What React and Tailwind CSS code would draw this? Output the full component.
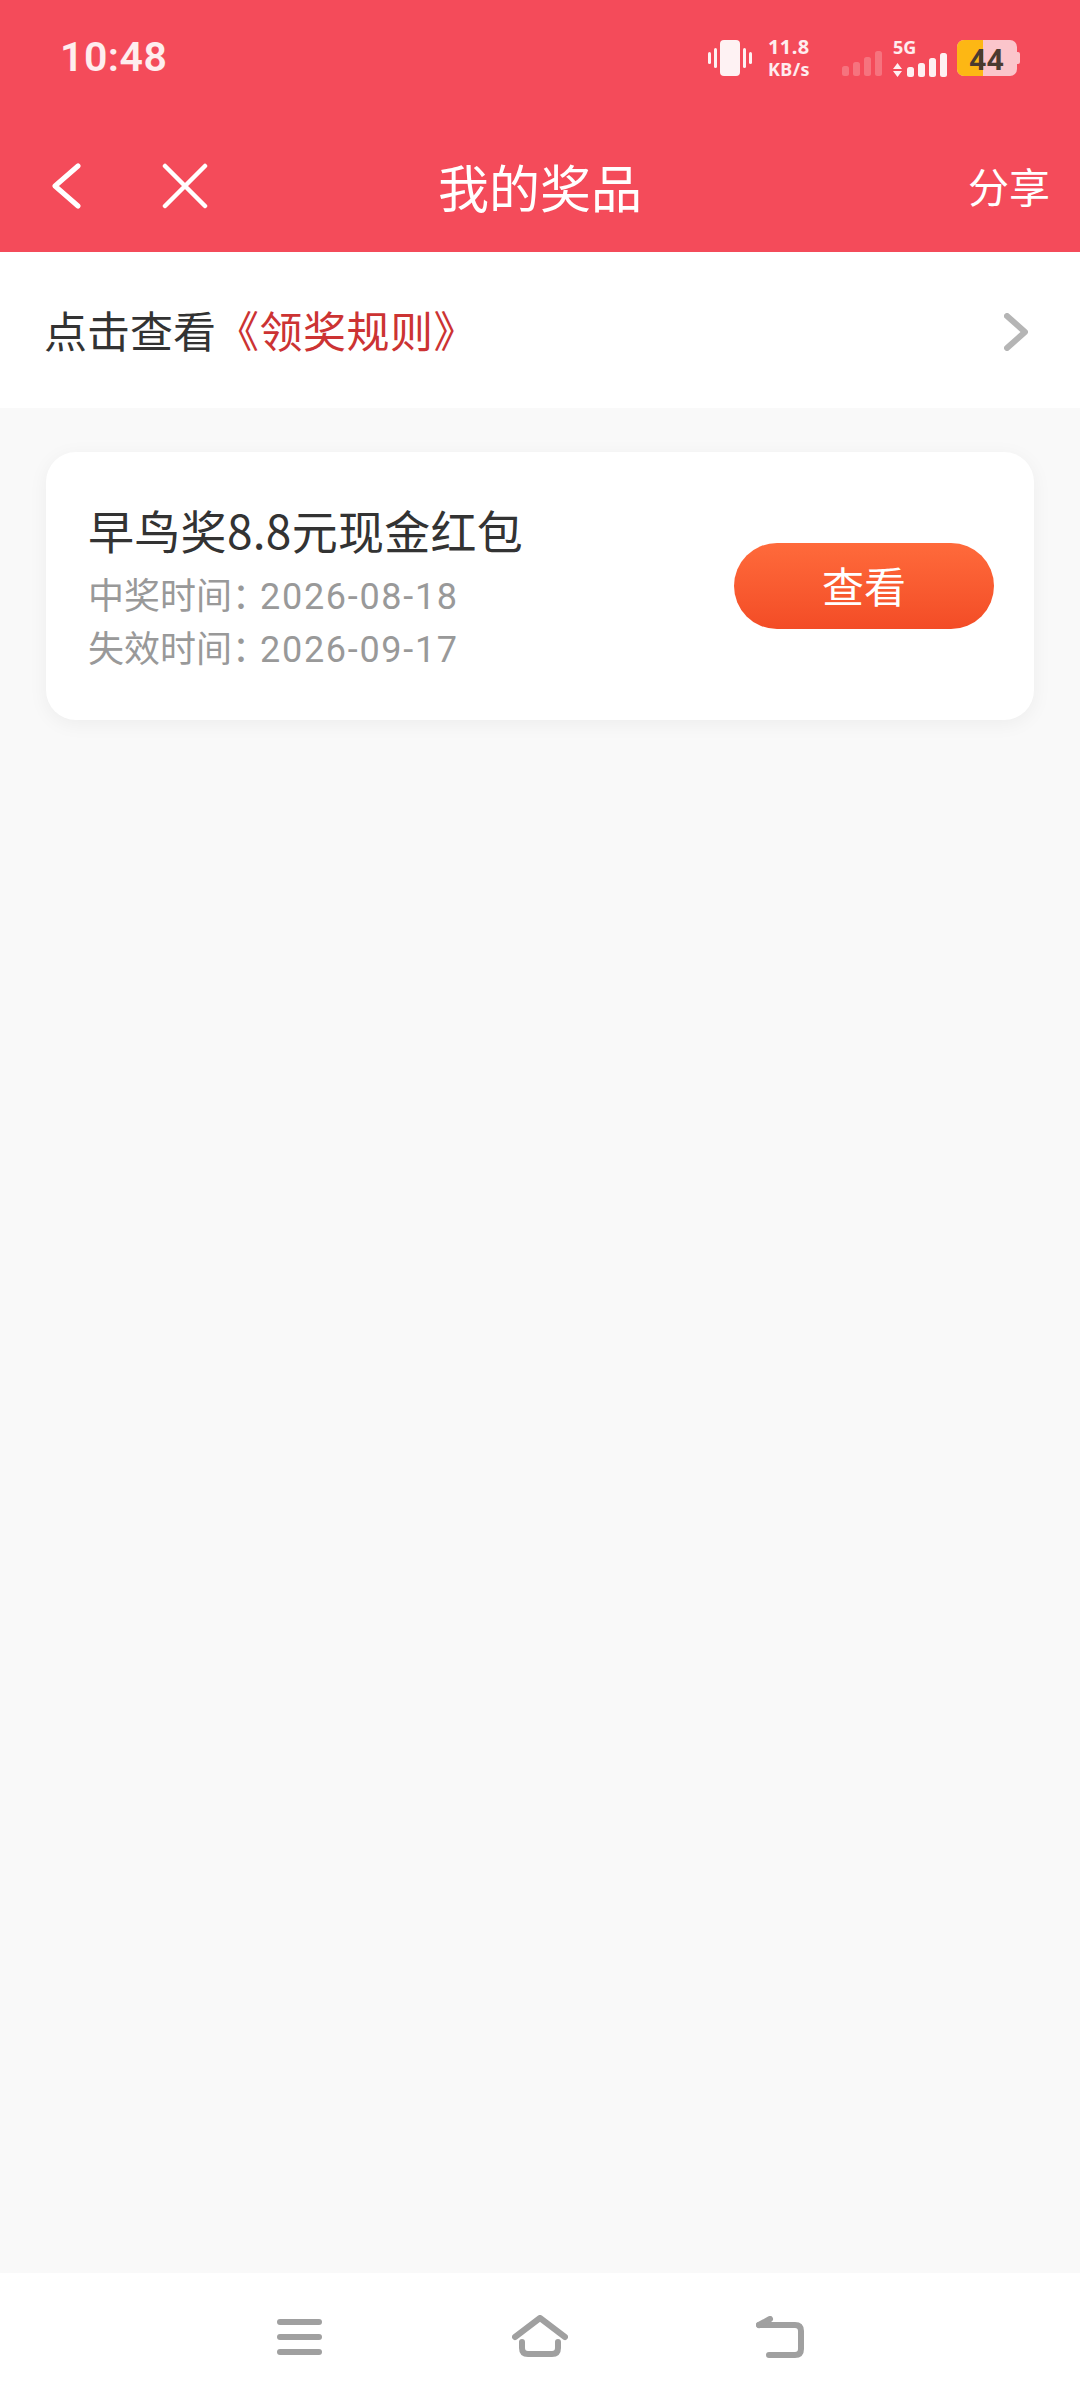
const cjk = { fontFamily: '"Noto Sans CJK SC", "Noto Sans", sans-serif' };

function StatusIcons() {
  return (
    <div className="flex items-center">
      {/* vibrate */}
      <svg width="44" height="36" viewBox="0 0 44 36" fill="#fff" opacity="0.93">
        <rect x="12" y="0" width="20" height="36" rx="4" />
        <rect x="0" y="12" width="3" height="12" rx="1.5" />
        <rect x="6" y="8" width="3" height="20" rx="1.5" />
        <rect x="35" y="8" width="3" height="20" rx="1.5" />
        <rect x="41" y="12" width="3" height="12" rx="1.5" />
      </svg>
      <div className="ml-4 w-[48px] flex flex-col text-white/90 font-bold text-[20px] leading-[22px] font-['Noto_Sans'] tracking-[0.4px]">
        <span>11.8</span>
        <span className="text-[18px] whitespace-nowrap">KB/s</span>
      </div>
      {/* first sim, no signal */}
      <svg className="ml-[26px] mt-[12px]" width="40" height="26" viewBox="0 0 40 26" fill="#fff" opacity="0.22">
        <rect x="0" y="15" width="7" height="10" rx="2.5" />
        <rect x="11" y="11" width="7" height="14" rx="2.5" />
        <rect x="22" y="6" width="7" height="19" rx="2.5" />
        <rect x="33" y="0" width="7" height="25" rx="2.5" />
      </svg>
      <div className="ml-[11px] w-[56px] relative h-[36px]">
        <span className="absolute left-0 top-[-3px] text-white/90 font-bold text-[18px] leading-[20px] font-['Noto_Sans']">5G</span>
        <svg className="absolute left-0 top-[12px]" width="56" height="26" viewBox="0 0 56 26" fill="#fff" opacity="0.92">
          <path d="M0 17 L4.5 11 L9 17 Z M0 19 L9 19 L4.5 25 Z" />
          <rect x="14" y="15" width="7" height="10" rx="2.5" />
          <rect x="25" y="11" width="7" height="14" rx="2.5" />
          <rect x="36" y="6" width="7" height="19" rx="2.5" />
          <rect x="47" y="1" width="7" height="24" rx="2.5" />
        </svg>
      </div>
      {/* battery */}
      <div className="ml-[8px] flex items-center">
        <div className="relative w-[60px] h-[36px] rounded-[7px] overflow-hidden bg-[#fbc5cb] flex">
          <div className="w-[26px] bg-[#fdb714]" />
          <span className="absolute inset-0 flex items-center justify-center text-[#4a3a30] font-bold text-[29px] leading-none font-['Noto_Sans'] tracking-[1px]">44</span>
        </div>
        <div className="w-[3px] h-[12px] bg-[#fbc5cb] rounded-r-[2px]" />
      </div>
    </div>
  );
}

function InfoLine({ label, value }) {
  return (
    <div className="h-[53px] leading-[53px] text-[36px] text-[#999] whitespace-nowrap" style={cjk}>
      {label}<span className="tracking-[-8px]">：</span>
      <span className="font-['Roboto'] tracking-[1.7px]">{value}</span>
    </div>
  );
}

export default function App() {
  return (
    <div className="w-[1080px] h-[2400px] flex flex-col bg-[#f9f9f9]" style={cjk}>
      {/* Header */}
      <div className="bg-[#f44b5a] h-[252px] shrink-0 flex flex-col">
        <div className="h-[116px] pl-[60px] pr-[60px] flex items-center justify-between">
          <span className="text-white/90 font-semibold text-[41px] font-['Roboto'] tracking-[0.5px]">10:48</span>
          <StatusIcons />
        </div>
        <div className="flex-1 pl-[51px] pr-[30px] pt-[4px] flex items-center justify-between relative">
          <div className="flex items-center gap-[81px]">
            <svg width="30" height="46" viewBox="0 0 30 46" fill="none" stroke="#fff" strokeWidth="5" strokeLinecap="round" strokeLinejoin="round">
              <path d="M27 3 L4 23 L27 43" />
            </svg>
            <svg width="46" height="46" viewBox="0 0 46 46" fill="none" stroke="#fff" strokeWidth="4.5" strokeLinecap="round">
              <path d="M3 3 L43 43 M43 3 L3 43" />
            </svg>
          </div>
          <span className="absolute left-0 right-0 text-center text-white text-[51px] pointer-events-none">我的奖品</span>
          <span className="text-white text-[41px]">分享</span>
        </div>
      </div>

      {/* Rules row */}
      <div className="bg-white h-[156px] shrink-0 pl-[44px] pr-[52px] flex items-center justify-between">
        <div className="text-[43px] text-[#333] whitespace-nowrap pb-[2px]">
          点击查看<span className="text-[#cc3333] tracking-[0.5px]">《领奖规则》</span>
        </div>
        <svg className="mt-[4px]" width="24" height="38" viewBox="0 0 24 38" fill="none" stroke="#b5b5b5" strokeWidth="6" strokeLinecap="round" strokeLinejoin="round">
          <path d="M3 3 L21 19 L3 35" />
        </svg>
      </div>

      {/* Prize list */}
      <div className="flex-1 pt-[44px] pl-[46px] pr-[46px]">
        <div className="bg-white rounded-[30px] h-[268px] pl-[42px] pr-[40px] flex items-center justify-between shadow-[0_4px_20px_rgba(0,0,0,0.05)]">
          <div className="flex flex-col pb-[2px]">
            <div className="text-[46px] leading-[62px] text-[#333] whitespace-nowrap mb-[7px] tracking-[0.3px]">早鸟奖8.8元现金红包</div>
            <InfoLine label="中奖时间" value="2026-08-18" />
            <InfoLine label="失效时间" value="2026-09-17" />
          </div>
          <button className="w-[260px] h-[86px] pb-[4px] rounded-full bg-gradient-to-b from-[#ff6a3b] to-[#f34c26] text-white text-[42px] flex items-center justify-center">
            查看
          </button>
        </div>
      </div>

      {/* Android nav bar */}
      <div className="bg-white h-[127px] shrink-0 flex items-start pt-[42px] pl-[277px]">
        <svg className="mt-[4px]" width="45" height="36" viewBox="0 0 45 36" fill="#a0a0a0">
          <rect x="0" y="0" width="45" height="6" rx="3" />
          <rect x="0" y="15" width="45" height="6" rx="3" />
          <rect x="0" y="30" width="45" height="6" rx="3" />
        </svg>
        <svg className="ml-[190px]" width="56" height="42" viewBox="0 0 56 42" fill="none" stroke="#a0a0a0" strokeWidth="6" strokeLinecap="round" strokeLinejoin="round">
          <path d="M3 22 L28 3 L53 22" />
          <path d="M10 27 V33 Q10 39 16 39 H40 Q46 39 46 33 V27" />
        </svg>
        <svg className="ml-[188px] mt-[1px]" width="48" height="42" viewBox="0 0 48 42" fill="none" stroke="#a0a0a0" strokeWidth="6" strokeLinecap="round" strokeLinejoin="round">
          <path d="M3 9 H39 Q45 9 45 15 V33 Q45 39 39 39 H13" />
          <path d="M3 9 L14 3" />
        </svg>
      </div>
    </div>
  );
}
